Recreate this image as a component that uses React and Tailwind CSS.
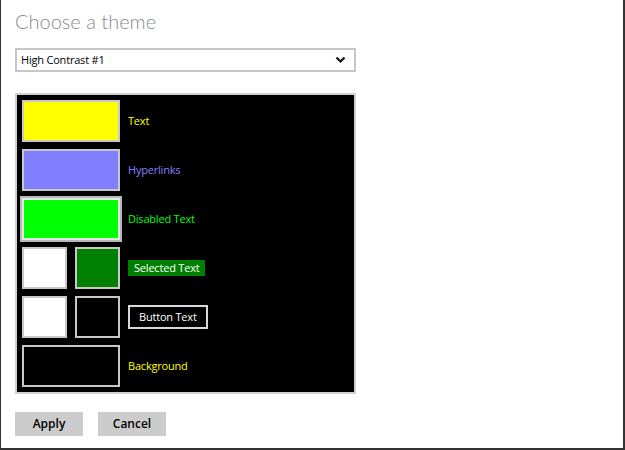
import React from 'react';

const font = { fontFamily: '"Open Sans", "Noto Sans", sans-serif' };
const titleFont = { fontFamily: 'Lato, "Open Sans", sans-serif' };

function Swatch({ color, wide, selected }) {
    return (
        <div className={`h-[42px] ${wide ? 'w-[98px]' : 'w-[45px]'} border-2 ${selected ? 'border-[#e6e6e6] ring-2 ring-[#b8b8b8]' : 'border-[#c8c8c8]'} ${color}`} />
    );
}

function Row({ children, label }) {
    return (
        <div className="flex items-center gap-2 h-[42px]">
            <div className="flex gap-2 w-[98px]">{children}</div>
            {label}
        </div>
    );
}

export default function App() {
    return (
        <div className="w-[625px] h-[450px] bg-white border-l border-r-2 border-b-2 border-[#333] pl-[14px] text-[11px] tracking-[-0.2px]" style={font}>
            <h1 className="pt-[7px] text-[20px] font-light text-[#8a8a8a] leading-[29px] tracking-normal" style={titleFont}>Choose a theme</h1>

            <div className="mt-[12px] w-[341px] h-[24px] border-2 border-[#c6c6c6] flex items-center justify-between pl-[4px] pr-[8px] text-black">
                <span className="text-[11px]">High Contrast #1</span>
                <svg width="11" height="8" viewBox="0 0 11 8">
                    <polyline points="1.5,1.5 5.5,5.5 9.5,1.5" fill="none" stroke="#111" strokeWidth="2.2" />
                </svg>
            </div>

            <div className="mt-[21px] w-[341px] h-[301px] border-2 border-[#d0d0d0] bg-black pl-[5px] pt-[5px] flex flex-col gap-[7px]">
                <Row label={<span className="text-[#ffff00]">Text</span>}>
                    <Swatch wide color="bg-[#ffff00]" />
                </Row>
                <Row label={<span className="text-[#8080ff]">Hyperlinks</span>}>
                    <Swatch wide color="bg-[#8080ff]" />
                </Row>
                <Row label={<span className="text-[#00ff00]">Disabled Text</span>}>
                    <Swatch wide selected color="bg-[#00ff00]" />
                </Row>
                <Row label={<span className="bg-[#008000] text-white px-[6px] leading-[16px]">Selected Text</span>}>
                    <Swatch color="bg-white" />
                    <Swatch color="bg-[#008000]" />
                </Row>
                <Row label={<span className="border-2 border-[#d8d8d8] text-white px-[9px] h-[24px] flex items-center">Button Text</span>}>
                    <Swatch color="bg-white" />
                    <Swatch color="bg-black" />
                </Row>
                <Row label={<span className="text-[#ffff00]">Background</span>}>
                    <Swatch wide color="bg-black" />
                </Row>
            </div>

            <div className="mt-[18px] flex gap-[15px] tracking-normal">
                <button className="w-[68px] h-[24px] bg-[#cccccc] font-semibold text-[12px] text-black">Apply</button>
                <button className="w-[68px] h-[24px] bg-[#cccccc] font-semibold text-[12px] text-black">Cancel</button>
            </div>
        </div>
    );
}
